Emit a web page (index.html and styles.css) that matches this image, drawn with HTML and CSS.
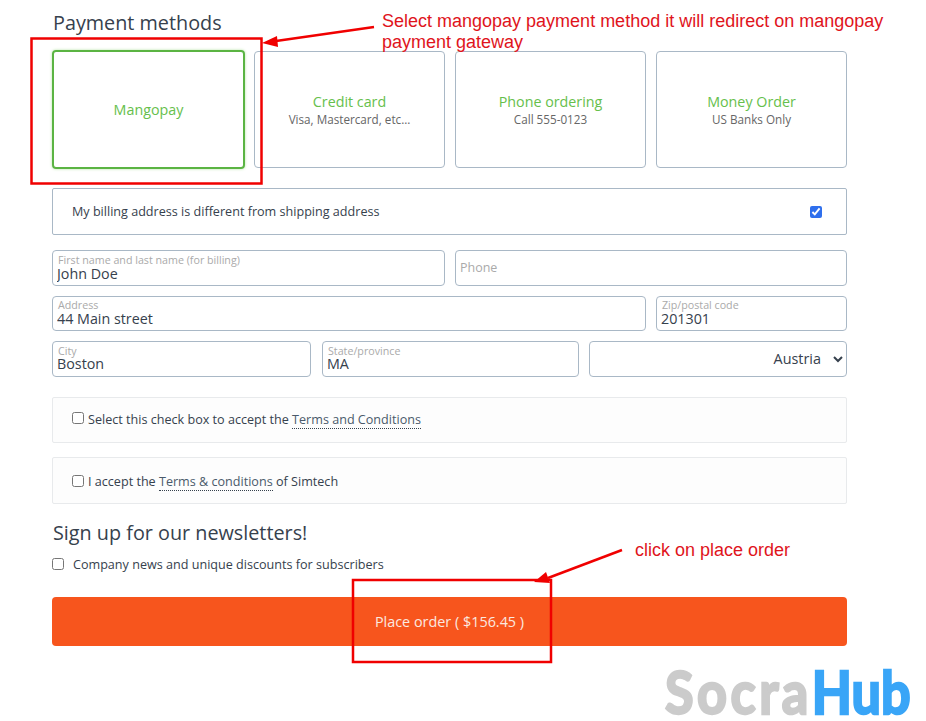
FILE: index.html
```html
<!DOCTYPE html>
<html lang="en">

<head>
    <meta charset="UTF-8">
    <title>Checkout</title>
    <link rel="stylesheet" href="styles.css">
</head>

<body>
    <div class="checkout">
        <h2 class="section-title">Payment methods</h2>
        <div class="methods">
            <div class="method selected">
                <div class="method-name">Mangopay</div>
            </div>
            <div class="method">
                <div class="method-name">Credit card</div>
                <div class="method-note">Visa, Mastercard, etc...</div>
            </div>
            <div class="method">
                <div class="method-name">Phone ordering</div>
                <div class="method-note">Call 555-0123</div>
            </div>
            <div class="method">
                <div class="method-name">Money Order</div>
                <div class="method-note">US Banks Only</div>
            </div>
        </div>

        <label class="billing-toggle">
            <span>My billing address is different from shipping address</span>
            <input type="checkbox" checked>
        </label>

        <form class="address-form">
            <div class="form-row row-one">
                <label class="field">
                    <span class="field-label">First name and last name (for billing)</span>
                    <input type="text" value="John Doe">
                </label>
                <label class="field empty">
                    <input type="text" placeholder="Phone">
                </label>
            </div>
            <div class="form-row row-two">
                <label class="field">
                    <span class="field-label">Address</span>
                    <input type="text" value="44 Main street">
                </label>
                <label class="field">
                    <span class="field-label">Zip/postal code</span>
                    <input type="text" value="201301">
                </label>
            </div>
            <div class="form-row row-three">
                <label class="field">
                    <span class="field-label">City</span>
                    <input type="text" value="Boston">
                </label>
                <label class="field">
                    <span class="field-label">State/province</span>
                    <input type="text" value="MA">
                </label>
                <select class="country">
                    <option>Austria</option>
                </select>
            </div>
        </form>

        <label class="terms terms-first">
            <input type="checkbox">
            <span>Select this check box to accept the <a href="#">Terms and Conditions</a></span>
        </label>
        <label class="terms terms-second">
            <input type="checkbox">
            <span>I accept the <a href="#">Terms &amp; conditions</a> of Simtech</span>
        </label>

        <h2 class="section-title newsletter-title">Sign up for our newsletters!</h2>
        <label class="newsletter">
            <input type="checkbox">
            <span>Company news and unique discounts for subscribers</span>
        </label>

        <button class="place-order" type="button">Place order ( $156.45 )</button>
    </div>

    <!-- annotations painted over the screenshot -->
    <svg class="marks" width="926" height="721" viewBox="0 0 926 721">
        <rect x="31.5" y="38.5" width="230" height="145" fill="none" stroke="#f00000" stroke-width="2.5"/>
        <rect x="353" y="580" width="198" height="82" fill="none" stroke="#f00000" stroke-width="2.5"/>
        <line x1="374" y1="27" x2="276" y2="41" stroke="#f00000" stroke-width="2.5"/>
        <polygon points="262,43 277,36 278,47" fill="#f00000"/>
        <line x1="622" y1="550" x2="548" y2="578" stroke="#f00000" stroke-width="2.5"/>
        <polygon points="534,582 546,572 550,583" fill="#f00000"/>
    </svg>
    <p class="note note-top">Select mangopay payment method it will redirect on mangopay payment gateway</p>
    <p class="note note-bottom">click on place order</p>

    <div class="logo"><span class="logo-grey">Socra</span><span class="logo-blue">Hub</span></div>
</body>
</html>
```

FILE: styles.css
```css
body {
    font-family: "Open Sans", Arial, sans-serif;
    margin: 0;
    padding: 0;
    height: 721px;
    overflow: hidden;
    background-color: #fff;
    color: #36414d;
    font-size: 13px;
}

.checkout {
    width: 795px;
    margin-left: 52px;
    padding-top: 9px;
}

.section-title {
    font-size: 19.8px;
    line-height: 28px;
    font-weight: 400;
    margin: 0 0 0 1px;
    color: #36414d;
}

.methods {
    display: grid;
    grid-template-columns: repeat(4, 191px);
    gap: 10px;
    margin-top: 14px;
    padding-left: 1px;
    height: 117px;
}

.method {
    display: flex;
    flex-direction: column;
    align-items: center;
    justify-content: center;
    border: 1px solid #a9b8c6;
    border-radius: 4px;
    box-sizing: border-box;
}

.method.selected {
    border: 2px solid #5bb443;
    box-shadow: 0 0 3px #b5e3a5;
    margin: -1px;
}

.method-name {
    color: #66c04c;
    font-size: 14.3px;
    line-height: 19px;
}

.method-note {
    color: #666;
    font-size: 11.7px;
    line-height: 17px;
}

.billing-toggle {
    display: flex;
    align-items: center;
    justify-content: space-between;
    box-sizing: border-box;
    height: 47px;
    margin-top: 20px;
    padding: 0 24px 0 19px;
    border: 1px solid #a9b8c6;
    border-radius: 2px;
    font-size: 12.6px;
}

.billing-toggle input {
    width: 12px;
    height: 12px;
    margin: 0;
    accent-color: #2f6fed;
}

.address-form {
    display: flex;
    flex-direction: column;
    margin-top: 15px;
}

.form-row {
    display: grid;
    gap: 10px;
    margin-bottom: 10px;
}

.row-one {
    grid-template-columns: 393px 1fr;
    height: 36px;
}

.row-two {
    grid-template-columns: 594px 1fr;
    height: 35px;
}

.row-three {
    grid-template-columns: 259px 257px 1fr;
    column-gap: 11px;
    height: 35px;
}

.field {
    display: flex;
    flex-direction: column;
    box-sizing: border-box;
    border: 1px solid #a9b8c6;
    border-radius: 4px;
    padding: 3px 4px 0 4px;
    overflow: hidden;
}

.row-one .field {
    padding-top: 4px;
}

.row-one .field input {
    margin-top: -1px;
}

.row-two .field input {
    margin-top: -1px;
}

.row-three .field {
    padding-top: 4px;
}

.row-three .field input {
    margin-top: -2px;
}

.field.empty {
    justify-content: center;
    padding-top: 0;
    padding-bottom: 2px;
}

.field-label {
    font-size: 10.7px;
    line-height: 11px;
    color: #aaa;
    padding-left: 1px;
}

.field input {
    border: none;
    outline: none;
    padding: 0;
    font-family: inherit;
    font-size: 14.3px;
    line-height: 17px;
    height: 17px;
    color: #36414d;
    background: transparent;
    width: 100%;
}

.field.empty input {
    font-size: 12.5px;
    margin-top: 0;
}

.field input::placeholder {
    color: #aaa;
}

.country {
    box-sizing: border-box;
    height: 36px;
    margin-left: -1px;
    border: 1px solid #a9b8c6;
    border-radius: 4px;
    background-color: #fff;
    font-family: inherit;
    font-size: 14.4px;
    color: #36414d;
    text-align: right;
    padding: 0 9px 2px 2px;
}

.terms {
    display: flex;
    align-items: center;
    gap: 4px;
    box-sizing: border-box;
    margin-top: 11px;
    padding: 0 19px;
    border: 1px solid #e8eaec;
    border-radius: 2px;
    background-color: #fdfdfd;
    font-size: 12.6px;
}

.terms-first {
    height: 46px;
    padding-bottom: 2px;
}

.terms-second {
    height: 47px;
    margin-top: 14px;
    padding-top: 2px;
}

.terms input,
.newsletter input {
    width: 12px;
    height: 12px;
    margin: 0 0 2px 0;
}

.terms a {
    color: #4a5a6b;
    text-decoration: none;
    border-bottom: 1px dotted #36414d;
}

.newsletter-title {
    margin-top: 15px;
}

.newsletter {
    display: flex;
    align-items: center;
    gap: 9px;
    margin-top: 9px;
    font-size: 12.6px;
    line-height: 18px;
}

.place-order {
    display: block;
    width: 100%;
    height: 49px;
    margin-top: 23px;
    padding-bottom: 1px;
    border: none;
    border-radius: 4px;
    background-color: #f7551d;
    color: #fbe9e0;
    font-family: inherit;
    font-size: 14.4px;
}

/* annotations */
.marks {
    position: absolute;
    left: 0;
    top: 0;
    pointer-events: none;
}

.note {
    position: absolute;
    margin: 0;
    font-family: "Liberation Sans", Arial, sans-serif;
    font-size: 18px;
    line-height: 21px;
    color: #e0141c;
}

.note-top {
    left: 382px;
    top: 11px;
    width: 530px;
}

.note-bottom {
    left: 635px;
    top: 540px;
}

.logo {
    position: absolute;
    left: 665px;
    top: 663px;
    display: flex;
    font-family: Lato, "Open Sans", sans-serif;
    font-size: 60px;
    line-height: 56px;
    font-weight: 700;
    white-space: nowrap;
    -webkit-text-stroke: 2.5px currentColor;
    transform: scaleX(0.87);
    transform-origin: left center;
}

.logo-grey {
    display: block;
    color: #cbcbcb;
    letter-spacing: 4px;
}

.logo-blue {
    display: block;
    color: #39a5f7;
}
```
